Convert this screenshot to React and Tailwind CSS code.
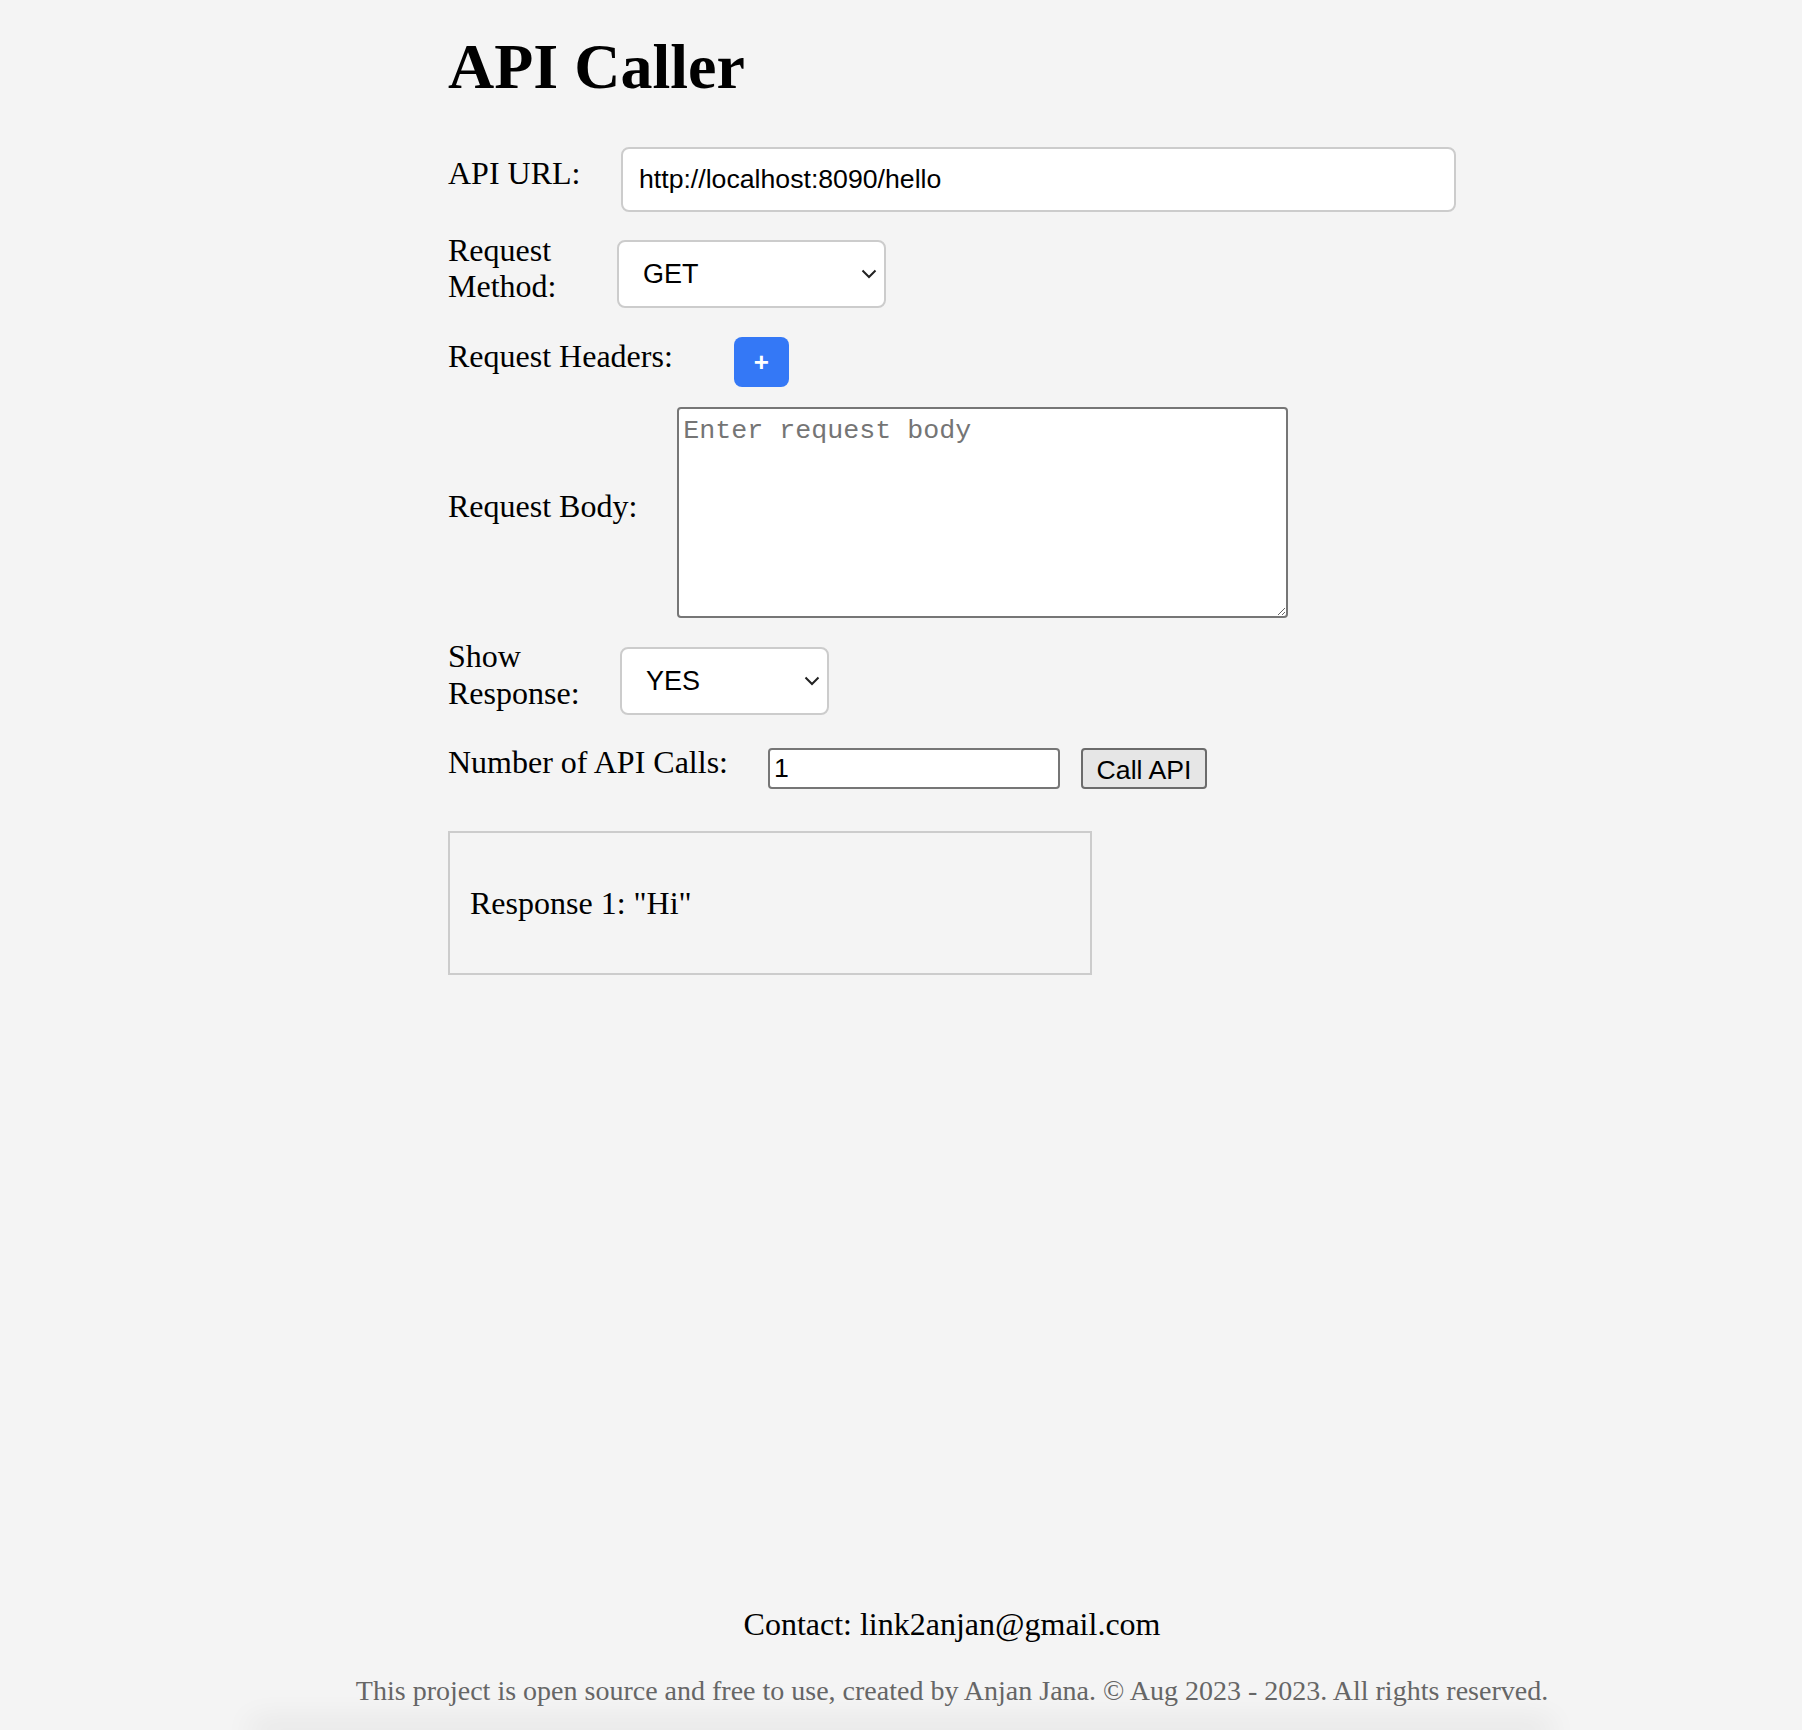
export default function App() {
  const serif = "font-['Liberation_Serif','Times_New_Roman',serif]";
  const sans = "font-['Liberation_Sans',Arial,sans-serif]";

  return (
    <div className={`${serif} relative flex h-[1730px] flex-col overflow-hidden bg-[#f4f4f4] text-black`}>
      <div className="ml-[448px] w-[1008px] pt-[30px]">
        <h1 className="mb-[43px] text-[64px] font-bold leading-[1.15]">API Caller</h1>

        {/* url */}
        <div className="mb-[20px] flex items-center">
          <label className="mb-[12px] mr-[40px] w-[133px] shrink-0 text-[32px] leading-[1.15]">API URL:</label>
          <input
            type="text"
            defaultValue="http://localhost:8090/hello"
            className={`${sans} h-[65px] w-[835px] rounded-[8px] border-2 border-[#cccccc] bg-white pl-[16px] text-[26.67px] text-black outline-none`}
          />
        </div>

        {/* method */}
        <div className="mb-[20px] flex items-center">
          <label className="mb-[12px] mr-[40px] w-[129px] shrink-0 text-[32px] leading-[1.15]">Request Method:</label>
          <div className="relative">
            <select
              defaultValue="GET"
              className={`${sans} h-[68px] w-[269px] appearance-none rounded-[8px] border-2 border-[#cccccc] bg-white pl-[24px] text-[27px] text-black outline-none`}
            >
              <option>GET</option>
              <option>POST</option>
              <option>PUT</option>
              <option>DELETE</option>
            </select>
            <svg className="pointer-events-none absolute right-[9px] top-[29px] h-[10px] w-[16px]" viewBox="0 0 16 10" fill="none" stroke="#222" strokeWidth="2">
              <path d="M1.5 1.5 8 8l6.5-6.5" />
            </svg>
          </div>
        </div>

        {/* headers */}
        <div className="mb-[20px] flex items-center">
          <label className="mb-[12px] mr-[40px] shrink-0 text-[32px] leading-[1.15]">Request Headers:</label>
          <button className={`${sans} ml-[21px] flex h-[50px] w-[55px] items-center justify-center rounded-[8px] bg-[#3478f6] text-[26px] font-bold text-white`}>
            +
          </button>
        </div>

        {/* body */}
        <div className="mb-[20px] flex items-center">
          <label className="mb-[12px] mr-[40px] shrink-0 text-[32px] leading-[1.15]">Request Body:</label>
          <textarea
            placeholder="Enter request body"
            className="h-[211px] w-[611px] rounded-[4px] border-2 border-[#767676] bg-white px-[4px] pb-[4px] pt-[7px] font-['Liberation_Mono','Courier_New',monospace] text-[26.67px] leading-[1.15] outline-none placeholder:text-[#757575]"
          />
        </div>

        {/* show response */}
        <div className="mb-[20px] flex items-center">
          <label className="mb-[12px] mr-[40px] w-[132px] shrink-0 text-[32px] leading-[1.15]">Show Response:</label>
          <div className="relative">
            <select
              defaultValue="YES"
              className={`${sans} h-[68px] w-[209px] appearance-none rounded-[8px] border-2 border-[#cccccc] bg-white pl-[24px] text-[27px] text-black outline-none`}
            >
              <option>YES</option>
              <option>NO</option>
            </select>
            <svg className="pointer-events-none absolute right-[9px] top-[29px] h-[10px] w-[16px]" viewBox="0 0 16 10" fill="none" stroke="#222" strokeWidth="2">
              <path d="M1.5 1.5 8 8l6.5-6.5" />
            </svg>
          </div>
        </div>

        {/* count */}
        <div className="mb-[20px] flex items-center">
          <label className="mb-[12px] mr-[40px] shrink-0 text-[32px] leading-[1.15]">Number of API Calls:</label>
          <input
            type="number"
            defaultValue="1"
            className={`${sans} h-[41px] w-[292px] rounded-[4px] border-2 border-[#767676] bg-white pl-[4px] text-[26.67px] text-black outline-none [appearance:textfield] [&::-webkit-inner-spin-button]:appearance-none`}
          />
          <button className={`${sans} ml-[21px] h-[41px] w-[126px] rounded-[4px] border-2 border-[#6b6b6b] bg-[#e6e6e6] text-[26.67px] text-black`}>
            Call API
          </button>
        </div>

        <div className="mt-[38px] w-[644px] border-2 border-[#cccccc] p-[20px]">
          <p className="my-[32px] text-[32px] leading-[1.15]">Response 1: "Hi"</p>
        </div>
      </div>

      <footer className="ml-[448px] mt-auto flex w-[1008px] flex-col items-center pb-[23px]">
        <p className="whitespace-nowrap text-[32px] leading-[1.15]">Contact: link2anjan@gmail.com</p>
        <p className="mt-[32px] whitespace-nowrap text-[28px] leading-[1.15] text-[#666666]">
          This project is open source and free to use, created by Anjan Jana. © Aug 2023 - 2023. All rights reserved.
        </p>
      </footer>
      <div className="mx-[260px] h-0 shadow-[0_0_30px_10px_rgba(0,0,0,0.07)]" />
    </div>
  );
}
